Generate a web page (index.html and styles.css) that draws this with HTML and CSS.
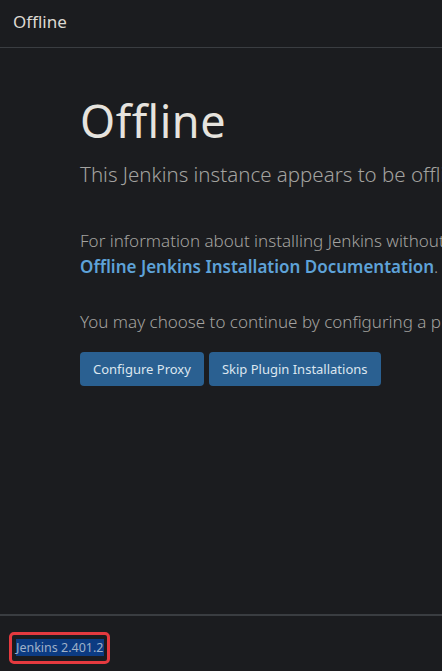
FILE: index.html
```html
<!DOCTYPE html>
<html lang="en">
<head>
<meta charset="utf-8">
<title>Offline</title>
<link rel="stylesheet" href="styles.css">
</head>
<body>
<div class="page">
  <header class="topbar">Offline</header>
  <main class="content">
    <h1 class="title">Offline</h1>
    <p class="lead">This Jenkins instance appears to be offline.</p>
    <p class="info">For information about installing Jenkins without an internet connection, see the<br><a class="doc-link" href="#">Offline Jenkins Installation Documentation</a>.</p>
    <p class="info second">You may choose to continue by configuring a proxy or skipping plugin installation.</p>
    <div class="actions">
      <button class="btn">Configure Proxy</button>
      <button class="btn">Skip Plugin Installations</button>
    </div>
  </main>
  <footer class="footer">
    <span class="version"><span class="version-text">Jenkins 2.401.2</span></span>
  </footer>
</div>
</body>
</html>
```
FILE: styles.css
```css
html, body {
  margin: 0;
  padding: 0;
  background: #1b1c1f;
  overflow: hidden;
  height: 100%;
}
body {
  font-family: "Noto Sans", "Open Sans", sans-serif;
  color: #e2ded8;
}
.page {
  display: flex;
  flex-direction: column;
  height: 671px;
  width: 442px;
}
.topbar {
  height: 48px;
  box-sizing: border-box;
  border-bottom: 1px solid #3a3d41;
  padding: 10px 13px 0;
  font-size: 17px;
  line-height: 24px;
  color: #ddd9d2;
  flex-shrink: 0;
}
.content {
  flex: 1;
  padding: 47px 0 0 80px;
  white-space: nowrap;
}
.title {
  margin: 0;
  font-size: 45px;
  font-weight: 400;
  line-height: 52px;
  color: #e6e3de;
  letter-spacing: 0.5px;
}
.lead {
  margin: 13px 0 0;
  font-size: 20.5px;
  font-weight: 300;
  line-height: 28px;
  color: #a3a29f;
}
.info {
  margin: 40px 0 0;
  font-size: 17px;
  font-weight: 300;
  line-height: 26px;
  color: #a3a29f;
}
.info.second {
  margin-top: 29px;
}
.doc-link {
  color: #5ea2d8;
  font-weight: 600;
  text-decoration: none;
}
.actions {
  display: flex;
  gap: 5px;
  margin-top: 17px;
}
.btn {
  font-family: inherit;
  font-size: 13px;
  font-weight: 400;
  color: #dce6ef;
  background: #2a6091;
  border: none;
  border-radius: 4px;
  height: 34px;
  padding: 0 13px;
}
.footer {
  height: 57px;
  box-sizing: border-box;
  border-top: 2px solid #3a3d41;
  padding: 16px 0 0 9px;
  flex-shrink: 0;
}
.version {
  display: inline-block;
  border: 3px solid #e53a3f;
  border-radius: 5px;
  padding: 3px 3px 3px 4px;
  font-size: 12.5px;
  line-height: 20px;
}
.version-text {
  background: #0c3b82;
  color: #9fb1c8;
}
```
